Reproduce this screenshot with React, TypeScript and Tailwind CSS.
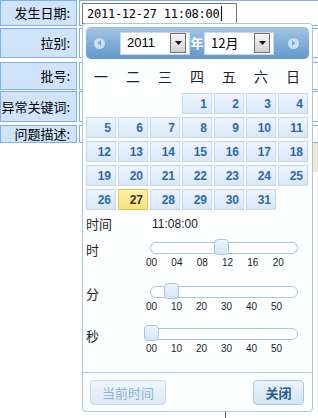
const cjk = { fontFamily: '"Noto Sans CJK SC", "Noto Sans", sans-serif' };
const arial = { fontFamily: '"Liberation Sans", Arial, sans-serif' };

const weekdays = ['一', '二', '三', '四', '五', '六', '日'];
const days: (number | null)[] = [null, null, null, ...Array.from({ length: 31 }, (_, i) => i + 1)];

function Arrow({ dir }: { dir: 'left' | 'right' }) {
	return (
		<div className="flex h-[11px] w-[11px] items-center justify-center rounded-full bg-[#cadff2]">
			<svg width="5" height="6" viewBox="0 0 5 6">
				{dir === 'left' ? <path d="M4 0 L0.5 3 L4 6 Z" fill="#86a9cf" /> : <path d="M1 0 L4.5 3 L1 6 Z" fill="#86a9cf" />}
			</svg>
		</div>
	);
}

function Select({ text }: { text: string }) {
	return (
		<div className="flex h-[23px] w-[70px] items-center justify-between border border-[#c9d9e8] bg-white pl-[6px] pr-[3px]" style={arial}>
			<span className="text-[13px] text-black" style={text.includes('月') ? cjk : arial}>
				{text}
			</span>
			<div className="flex h-[20px] w-[16px] items-center justify-center border border-[#6f6f6f] bg-linear-to-b from-[#f6f6f6] to-[#d2d2d2]">
				<svg width="7" height="4" viewBox="0 0 7 4">
					<path d="M0 0 H7 L3.5 4 Z" fill="#111" />
				</svg>
			</div>
		</div>
	);
}

function Slider({ label, value, max, ticks, tickW }: { label: string; value: number; max: number; ticks: string[]; tickW: string }) {
	const left = -6 + (value / max) * 146.4;
	return (
		<div className="flex items-start">
			<div className="w-[64px] pt-[3px] text-[13px] leading-[16px] text-[#222]" style={cjk}>
				{label}
			</div>
			<div className="relative w-[148px]">
				<div className="mt-[3px] h-[12px] rounded-full border border-[#a7c6e4] bg-white" />
				<div
					className="absolute top-0 h-[16px] w-[15px] rounded-[4px] border border-[#a7c6e4] bg-linear-to-b from-[#edf4fc] to-[#d4e5f6]"
					style={{ left }}
				/>
				<div className="ml-[-4px] mt-[2px] flex text-[10px] leading-[13px] text-[#222]" style={arial}>
					{ticks.map((t) => (
						<span key={t} className={tickW}>
							{t}
						</span>
					))}
				</div>
			</div>
		</div>
	);
}

function Row({ label, className, children }: { label: string; className: string; children?: React.ReactNode }) {
	return (
		<div className={`flex gap-[2px] ${className}`}>
			<div
				className="flex w-[77px] shrink-0 items-center justify-end border border-[#7fb0ea] bg-[#cfe3fa] pr-[6px] text-[13px] text-black"
				style={cjk}
			>
				{label}
			</div>
			<div className="relative w-[260px] shrink-0 border border-[#7fb0ea] bg-white">{children}</div>
		</div>
	);
}

export default function App() {
	return (
		<div className="relative h-[418px] w-[318px] overflow-hidden bg-white">
			<div className="flex flex-col">
				<Row label="发生日期:" className="h-[26px]">
					<div
						className="ml-[2px] mt-[2px] flex h-[21px] w-[155px] items-center border border-[#7a7a7a] pl-[4px] text-[12px] tracking-[-0.25px] text-black"
						style={{ fontFamily: '"DejaVu Sans Mono", "Liberation Mono", monospace' }}
					>
						2011-12-27 11:08:00
						<span className="ml-[1px] h-[15px] w-px bg-black" />
					</div>
				</Row>
				<Row label="拉别:" className="mt-[2px] h-[30px]" />
				<Row label="批号:" className="mt-[4px] h-[28px]" />
				<Row label="异常关键词:" className="mt-[1px] h-[31px]" />
				<Row label="问题描述:" className="mt-[3px] h-[18px]" />
				<div className="ml-[240px] h-[29px] w-[100px] bg-[#ece9d8]" />
				<div className="ml-[225px] mt-[240px] h-[8px] w-px bg-[#555]" />
			</div>

			<div className="absolute left-[82px] top-[23px] flex h-[389px] w-[231px] flex-col rounded-[4px] border border-[#a9c6e2] bg-[#fdfeff]">
				<div className="mx-[3px] mt-[3px] flex h-[32px] items-center rounded-[5px] bg-linear-to-b from-[#a2c5e7] to-[#6198cb] pl-[8px]">
					<Arrow dir="left" />
					<div className="ml-[15px]">
						<Select text="2011" />
					</div>
					<div className="w-[14px] text-center text-[13px] font-bold text-white" style={cjk}>
						年
					</div>
					<Select text="12月" />
					<div className="ml-[14px]">
						<Arrow dir="right" />
					</div>
				</div>

				<div className="ml-[3px] grid h-[34px] grid-cols-[repeat(7,30px)] items-center gap-x-[2px] text-[14px] text-[#222]" style={cjk}>
					{weekdays.map((w) => (
						<div key={w} className="text-center">
							{w}
						</div>
					))}
				</div>

				<div className="ml-[3px] grid grid-cols-[repeat(7,30px)] auto-rows-[21px] gap-x-[2px] gap-y-[3px]" style={arial}>
					{days.map((d, i) =>
						d === null ? (
							<div key={`e${i}`} />
						) : d === 27 ? (
							<div
								key={d}
								className="flex items-center justify-end border border-[#e8c44c] bg-linear-to-b from-[#fdf0a6] to-[#f9e27c] pr-[4px] text-[12px] font-bold text-[#333]"
							>
								{d}
							</div>
						) : (
							<div
								key={d}
								className="flex items-center justify-end border border-[#c3d8ee] bg-linear-to-b from-[#eef5fd] via-[#e4effb] to-[#d7e7f8] pr-[4px] text-[12px] font-bold text-[#2f68aa]"
							>
								{d}
							</div>
						),
					)}
				</div>

				<div className="ml-[3px] mt-[4px] flex h-[20px] items-center">
					<span className="w-[66px] text-[13px] text-[#222]" style={cjk}>
						时间
					</span>
					<span className="text-[12px] text-[#222]" style={arial}>
						11:08:00
					</span>
				</div>

				<div className="ml-[3px] mt-[5px] flex flex-col gap-[14px]">
					<Slider label="时" value={11} max={23} ticks={['00', '04', '08', '12', '16', '20']} tickW="w-[25.6px]" />
					<Slider label="分" value={8} max={59} ticks={['00', '10', '20', '30', '40', '50']} tickW="w-[25px]" />
				</div>
				<div className="ml-[3px] mt-[12px]">
					<Slider label="秒" value={0} max={59} ticks={['00', '10', '20', '30', '40', '50']} tickW="w-[25px]" />
				</div>

				<div className="mt-auto border-t border-[#a9c6e2] px-[7px] pb-[6px] pt-[7px]">
					<div className="flex items-center justify-between pr-[1px]">
						<div
							className="flex h-[25px] w-[76px] items-center justify-center rounded-[4px] border border-[#c9dcef] bg-linear-to-b from-[#eff6fd] to-[#dde9f6] text-[13px] text-[#8db1d6]"
							style={cjk}
						>
							当前时间
						</div>
						<div
							className="flex h-[25px] w-[51px] items-center justify-center rounded-[4px] border border-[#a9c6e2] bg-linear-to-b from-[#ecf4fc] to-[#d3e4f5] text-[13px] font-bold text-[#2b5b8a]"
							style={cjk}
						>
							关闭
						</div>
					</div>
				</div>
			</div>
		</div>
	);
}
